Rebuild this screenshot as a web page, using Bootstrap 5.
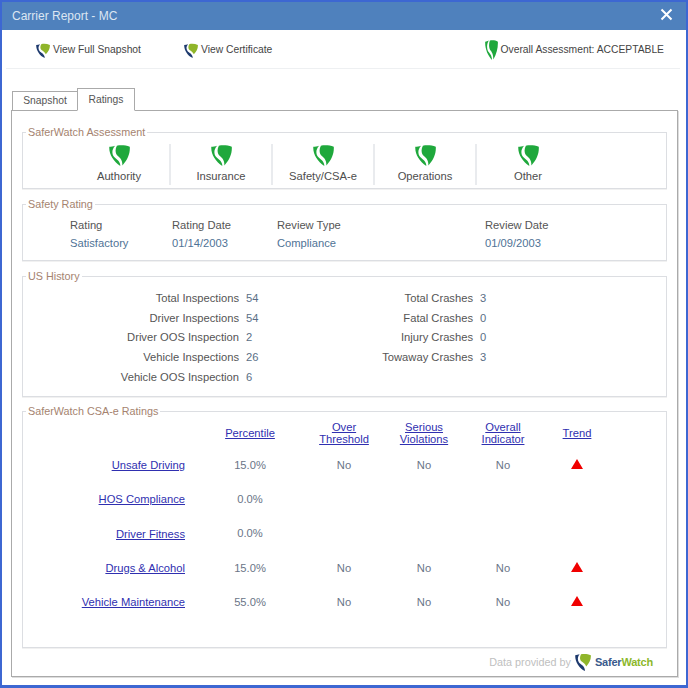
<!DOCTYPE html>
<html>
<head>
    <title>Carrier Report - MC</title>
    <link href="https://cdn.jsdelivr.net/npm/bootstrap@5.3.3/dist/css/bootstrap.min.css" rel="stylesheet">
    <style>
        html, body { height: 100%; }
        body { background: #fff; font-family: "Liberation Sans", Arial, sans-serif; font-size: 11.2px; color: #555; }
        .win { width: 688px; height: 688px; border: 2px solid #3d67d2; border-bottom-width: 3px; display: flex; flex-direction: column; background: #fff; overflow: hidden; }
        .win-title { height: 28px; flex: none; background: #4f81bd; color: #dce6f2; font-size: 12px; padding: 0 13px 0 10px; }
        .win-close { color: #fff; width: 13px; height: 13px; margin-bottom: 4px; }
        .win-tools { height: 39px; flex: none; padding: 0 14px 0 30px; border-bottom: 1px solid #eef0f2; margin-right: 6px; margin-left: 4px; color: #444; font-size: 10.3px; }
        .tool-link { width: 148px; gap: 3px; padding-top: 2px; }
        .tool-link + .tool-link { width: 120px; }
        .tool-overall { gap: 3px; margin-right: 2px; padding-top: 1px; }
        .tab-area { flex: 1; padding: 19px 8px 8px 9px; display: flex; flex-direction: column; min-height: 0; }
        .tab-strip { height: 23px; padding-left: 1px; flex: none; margin-bottom: -1px; position: relative; z-index: 1; align-items: flex-end; font-size: 10.3px; }
        .tab-item { height: 20px; width: 66px; border: 1px solid #aaa; text-align: center; line-height: 18px; color: #555; background: #fff; }
        .tab-item.on { height: 23px; width: 58px; border-bottom-color: #fff; line-height: 21px; margin-left: -1px; }
        .tab-body { flex: 1; border: 1px solid #aaa; padding: 15px 10px 0 10px; box-shadow: 1px 1px 0 #ddd; }
        .fs { border: 1px solid #dcdee2; padding: 0; margin: 0 0 9px; box-shadow: 0 1px 0 #f1f1f1; }
        .fs legend { float: none; width: auto; margin: 0 0 0 3px; padding: 0 2px; font-size: 10.8px; line-height: 13px; color: #a5836f; }
        .assess-grid { display: grid; grid-template-columns: repeat(5, 102px); padding: 5px 0 0 46px; height: 49px; }
        .assess-cell { display: flex; flex-direction: column; align-items: center; border-right: 2px solid #e9ebee; color: #4d4d4d; line-height: 14px; gap: 3px; height: 41px; }
        .assess-cell:last-child { border-right: 0; }
        .rating-grid { display: grid; grid-template-columns: 102px 105px 208px 120px; grid-auto-rows: 18px; padding: 5px 0 0 47px; height: 49px; line-height: 18px; }
        .val-blue { color: #4f7396; }
        .hist-grid { display: grid; grid-template-columns: 216px 31px 189px 40px; padding: 6px 0 0 0; height: 113px; grid-auto-rows: 19.7px; line-height: 19.7px; column-gap: 7px; }
        .hist-grid .lbl { text-align: right; }
        .hist-grid .num { color: #5a6f86; }
        .csa-grid { display: grid; grid-template-columns: 162px 130px 58px 102px 56px 92px; grid-template-rows: 30px repeat(5, 34.3px); text-align: center; align-items: center; height: 229px; color: #6a7587; }
        .csa-grid a { color: #2f2fb0; line-height: 12px; display: block; }
        .csa-grid .lbl { text-align: right; }
        .tri { width: 0; height: 0; border-left: 6.5px solid transparent; border-right: 6.5px solid transparent; border-bottom: 10px solid #f00000; margin: 0 auto 2px; }
        .csa-set { margin: -1px 0 0; }
        .report-foot { color: #c0c0c0; gap: 4px; padding: 5px 14px 0 0; font-size: 10.8px; }
        .sw-name { font-weight: 700; font-size: 11px; color: #3a5a8c; letter-spacing: -.2px; }
        .sw-name span { color: #8cb82b; }
    </style>
</head>
<body>
    <svg width="0" height="0" class="position-absolute">
        <defs>
            <symbol id="shield" viewBox="0 0 20 20" preserveAspectRatio="none">
                <path fill="#1fa83c" d="M7.500 1.500C11 .8 16 1 19.800 2.500C20.200 8.500 18 14 12.800 19.500C12.800 14.500 10.500 12.500 8.500 11C6 9 5.500 5 7.500 1.500z"/>
                <path fill="#1fa83c" d="M.3 2.500C2 2.500 4 2 5.800 1.500C3 4.500 2.500 8 4.200 11C6 13.500 10.800 15 10.800 20C4 15.500-.2 9 .3 2.500z"/>
            </symbol>
            <symbol id="logo" viewBox="0 0 20 20" preserveAspectRatio="none">
                <path fill="#8fb52a" d="M7.500 1.500C11 .8 16 1 19.800 2.500C20.200 7.500 18 11 14 15C13 12 10.500 11 8.500 9.500C6 8 5.500 5 7.500 1.500z"/>
                <path fill="#1e3a6e" d="M.3 2.500C2 2.500 4 2 5.800 1.500C3 4.500 3 8 5 10.500C7 13 12.500 14 12.500 20C5 17.500-.2 9 .3 2.500z"/>
            </symbol>
        </defs>
    </svg>

    <div class="win">
        <div class="win-title d-flex align-items-center justify-content-between">
            <span>Carrier Report - MC</span>
            <svg class="win-close" viewBox="0 0 13 13"><path d="M1.500 1.500l10 10M11.500 1.500l-10 10" stroke="#fff" stroke-width="2"/></svg>
        </div>

        <!-- toolbar -->
        <div class="win-tools d-flex align-items-center">
            <div class="tool-link d-flex align-items-center">
                <svg width="14" height="15"><use href="#logo"/></svg><span>View Full Snapshot</span>
            </div>
            <div class="tool-link d-flex align-items-center">
                <svg width="14" height="15"><use href="#logo"/></svg><span>View Certificate</span>
            </div>
            <div class="tool-overall d-flex align-items-center ms-auto">
                <svg width="13" height="21"><use href="#shield"/></svg><span>Overall Assessment: ACCEPTABLE</span>
            </div>
        </div>

        <div class="tab-area">
            <div class="tab-strip d-flex">
                <div class="tab-item">Snapshot</div>
                <div class="tab-item on">Ratings</div>
            </div>
            <div class="tab-body">
                <fieldset class="fs">
                    <legend>SaferWatch Assessment</legend>
                    <div class="assess-grid">
                        <div class="assess-cell"><svg width="21" height="22"><use href="#shield"/></svg>Authority</div>
                        <div class="assess-cell"><svg width="21" height="22"><use href="#shield"/></svg>Insurance</div>
                        <div class="assess-cell"><svg width="21" height="22"><use href="#shield"/></svg>Safety/CSA-e</div>
                        <div class="assess-cell"><svg width="21" height="22"><use href="#shield"/></svg>Operations</div>
                        <div class="assess-cell"><svg width="21" height="22"><use href="#shield"/></svg>Other</div>
                    </div>
                </fieldset>

                <fieldset class="fs">
                    <legend>Safety Rating</legend>
                    <div class="rating-grid">
                        <div>Rating</div><div>Rating Date</div><div>Review Type</div><div>Review Date</div>
                        <div class="val-blue">Satisfactory</div><div class="val-blue">01/14/2003</div><div class="val-blue">Compliance</div><div class="val-blue">01/09/2003</div>
                    </div>
                </fieldset>

                <fieldset class="fs">
                    <legend>US History</legend>
                    <div class="hist-grid">
                        <div class="lbl">Total Inspections</div><div class="num">54</div><div class="lbl">Total Crashes</div><div class="num">3</div>
                        <div class="lbl">Driver Inspections</div><div class="num">54</div><div class="lbl">Fatal Crashes</div><div class="num">0</div>
                        <div class="lbl">Driver OOS Inspection</div><div class="num">2</div><div class="lbl">Injury Crashes</div><div class="num">0</div>
                        <div class="lbl">Vehicle Inspections</div><div class="num">26</div><div class="lbl">Towaway Crashes</div><div class="num">3</div>
                        <div class="lbl">Vehicle OOS Inspection</div><div class="num">6</div>
                    </div>
                </fieldset>

                <fieldset class="fs csa-set">
                    <legend>SaferWatch CSA-e Ratings</legend>
                    <div class="csa-grid">
                        <div></div><a href="#">Percentile</a><a href="#">Over Threshold</a><a href="#">Serious<br>Violations</a><a href="#">Overall<br>Indicator</a><a href="#">Trend</a>

                        <a href="#" class="lbl">Unsafe Driving</a><div>15.0%</div><div>No</div><div>No</div><div>No</div><div class="tri"></div>
                        <a href="#" class="lbl">HOS Compliance</a><div>0.0%</div><div></div><div></div><div></div><div></div>
                        <a href="#" class="lbl">Driver Fitness</a><div>0.0%</div><div></div><div></div><div></div><div></div>
                        <a href="#" class="lbl">Drugs &amp; Alcohol</a><div>15.0%</div><div>No</div><div>No</div><div>No</div><div class="tri"></div>
                        <a href="#" class="lbl">Vehicle Maintenance</a><div>55.0%</div><div>No</div><div>No</div><div>No</div><div class="tri"></div>
                    </div>
                </fieldset>

                <div class="report-foot d-flex align-items-center justify-content-end">
                    <span>Data provided by</span>
                    <svg width="16" height="18"><use href="#logo"/></svg>
                    <span class="sw-name">Safer<span>Watch</span></span>
                </div>
            </div>
        </div>
    </div>

    <script src="https://cdn.jsdelivr.net/npm/bootstrap@5.3.3/dist/js/bootstrap.bundle.min.js"></script>
</body>
</html>
